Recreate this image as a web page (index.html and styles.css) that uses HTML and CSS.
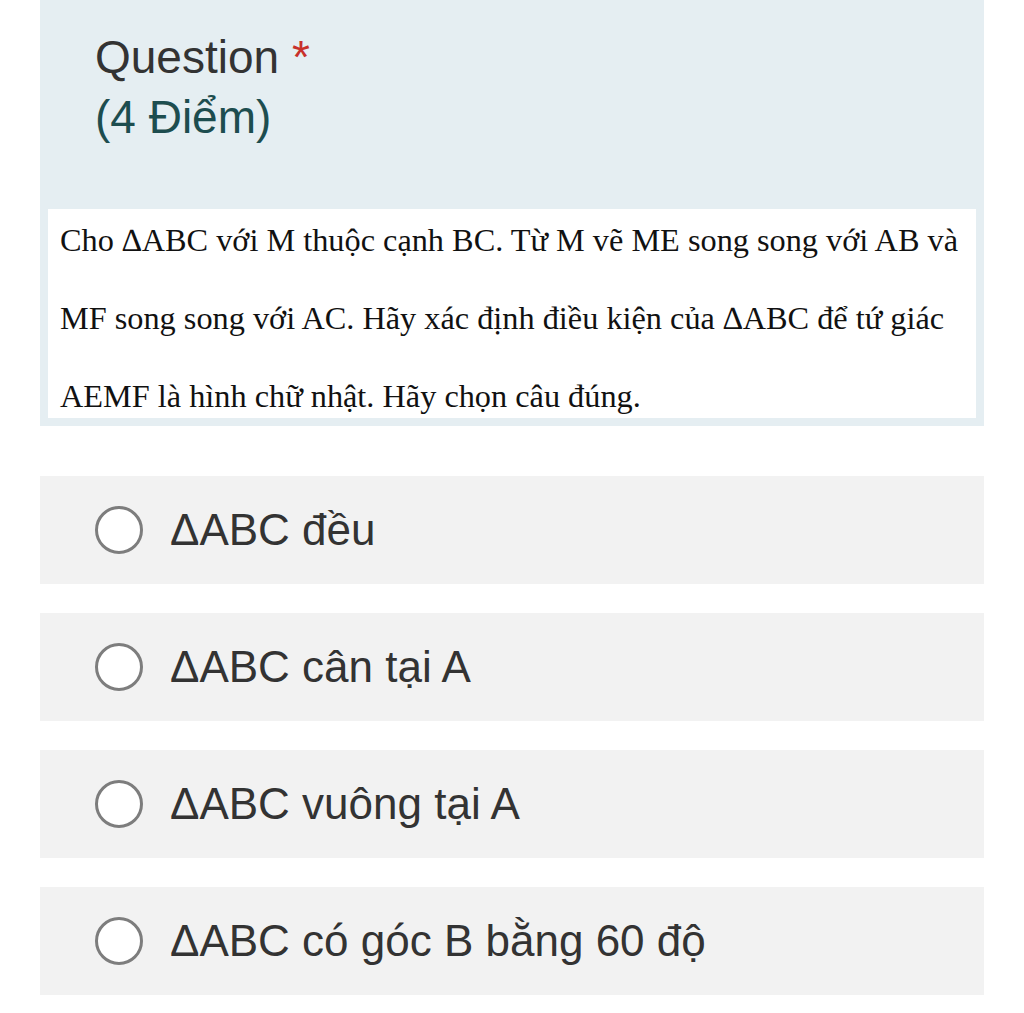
FILE: index.html
```html
<!DOCTYPE html>
<html lang="vi">
<head>
    <meta charset="UTF-8">
    <meta name="viewport" content="width=device-width, initial-scale=1.0">
    <title>Question</title>
    <link rel="stylesheet" href="styles.css">
</head>
<body>
    <div class="form">
        <div class="question-card">
            <div class="question-head">
                <div class="question-title">Question <span class="required">*</span></div>
                <div class="question-points">(4 Điểm)</div>
            </div>
            <div class="question-body">
                <p>Cho ∆ABC với M thuộc cạnh BC. Từ M vẽ ME song song với AB và<br>MF song song với AC. Hãy xác định điều kiện của ∆ABC để tứ giác<br>AEMF là hình chữ nhật. Hãy chọn câu đúng.</p>
            </div>
        </div>

        <div class="options">
            <label class="option">
                <span class="radio"></span>
                <span class="option-text">ΔABC đều</span>
            </label>
            <label class="option">
                <span class="radio"></span>
                <span class="option-text">ΔABC cân tại A</span>
            </label>
            <label class="option">
                <span class="radio"></span>
                <span class="option-text">ΔABC vuông tại A</span>
            </label>
            <label class="option">
                <span class="radio"></span>
                <span class="option-text">ΔABC có góc B bằng 60 độ</span>
            </label>
        </div>
    </div>
</body>
</html>
```

FILE: styles.css
```css
body {
    margin: 0;
    background: #fff;
    font-family: "Liberation Sans", Arial, sans-serif;
}
.form {
    margin: 0 40px;
}
.question-card {
    background-color: #e5eef2;
    padding: 0 8px 8px;
}
.question-head {
    height: 209px;
    box-sizing: border-box;
    padding: 27px 0 0 47px;
    font-size: 46px;
    line-height: 60px;
}
.question-title {
    color: #333;
}
.required {
    color: #c8312b;
}
.question-points {
    color: #1d4d4f;
}
.question-body {
    background: #fff;
    height: 209px;
    overflow: hidden;
    padding: 0 12px;
}
.question-body p {
    margin: -8px 0 0;
    font-family: "Liberation Serif", "Times New Roman", serif;
    font-size: 32.3px;
    line-height: 78px;
    color: #111;
    white-space: nowrap;
}
.options {
    display: flex;
    flex-direction: column;
    gap: 29px;
    margin-top: 50px;
}
.option {
    display: flex;
    align-items: center;
    height: 108px;
    background-color: #f2f2f2;
    padding-left: 55px;
    cursor: pointer;
}
.radio {
    width: 42px;
    height: 42px;
    border: 3px solid #7d7d7d;
    border-radius: 50%;
    background: #fff;
    flex-shrink: 0;
}
.option-text {
    margin-left: 27px;
    font-size: 44px;
    color: #333;
}
```
